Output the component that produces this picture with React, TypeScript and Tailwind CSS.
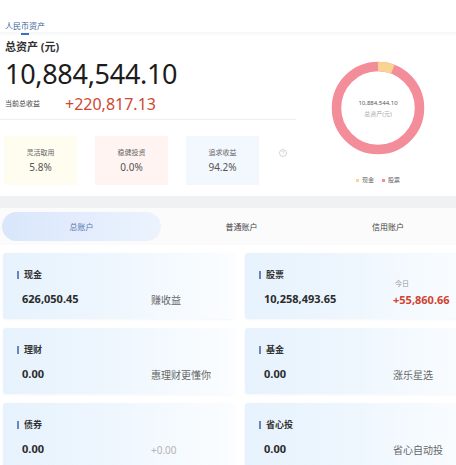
import React from 'react';

const font = { fontFamily: '"Noto Sans", "Noto Sans CJK SC", sans-serif' };

interface CardProps {
  title: string;
  value: string;
  side?: string;
  sideTop?: string;
  sideTone?: 'normal' | 'red' | 'muted';
}

const AccountCard: React.FC<CardProps> = ({ title, value, side, sideTop, sideTone = 'normal' }) => {
  const sideCls =
    sideTone === 'red'
      ? 'text-[11px] font-bold text-[#d0422f]'
      : sideTone === 'muted'
      ? 'text-[10px] text-[#b4b4b4]'
      : 'text-[10px] text-[#666]';
  return (
    <div className="h-[66px] rounded-[3px] bg-gradient-to-r from-[#e6f2fd] via-[#eff7fe] to-[#fbfdff] shadow-[0_1px_3px_rgba(0,0,0,0.04)] pt-[15px]">
      <div className="flex items-center h-[14px] pl-[14px]">
        <span className="w-[2px] h-[8px] bg-[#6a86b8] mr-[5px]" />
        <span className="text-[9px] font-bold text-[#333]">{title}</span>
      </div>
      <div className="grid grid-cols-[129px_1fr] mt-[8px] pl-[19px] items-center">
        <span className="text-[11px] font-bold text-[#2b2b2b] leading-[16px]">{value}</span>
        <div className="relative leading-none">
          {sideTop && (
            <span className="absolute bottom-full left-[2px] mb-[3px] text-[7px] text-[#999] leading-none">{sideTop}</span>
          )}
          {side && <span className={`${sideCls} leading-[16px]`}>{side}</span>}
        </div>
      </div>
    </div>
  );
};

const Donut: React.FC = () => {
  const r = 41.5;
  const c = 2 * Math.PI * r;
  const cash = c * 0.058;
  return (
    <div className="relative w-[94px] h-[94px]">
      <svg width="94" height="94" viewBox="0 0 94 94" className="-rotate-90">
        <circle cx="47" cy="47" r={r} fill="none" stroke="#f48d9a" strokeWidth="9.5" />
        <circle
          cx="47"
          cy="47"
          r={r}
          fill="none"
          stroke="#f8d391"
          strokeWidth="9.5"
          strokeDasharray={`${cash} ${c - cash}`}
        />
      </svg>
      <div className="absolute inset-0 flex flex-col items-center justify-center">
        <span className="text-[6px] text-[#555] leading-none">10,884,544.10</span>
        <span className="text-[6px] text-[#aaa] leading-none mt-[5px]">总资产(元)</span>
      </div>
    </div>
  );
};

export default function App() {
  return (
    <div className="w-[456px] h-[465px] overflow-hidden bg-white" style={font}>
      {/* Currency tab */}
      <div className="h-[32px] pl-[5px] pt-[11px]">
        <div className="inline-flex flex-col items-center">
          <span className="text-[8px] text-[#3d5f99] leading-[10px]">人民币资产</span>
          <span className="w-[8px] h-[1.5px] bg-[#3d6fc4] mt-[2px]" />
        </div>
      </div>
      <div className="h-[4px] bg-gradient-to-b from-[#f4f6f8] to-white" />

      {/* Total assets */}
      <div className="flex h-[160px]">
        <div className="w-[296px] pl-[5px]">
          <div className="text-[11px] font-bold text-[#333] leading-[14px] mt-[4px]">总资产 (元)</div>
          <div className="text-[27px] text-[#1c1c1c] leading-[32px] mt-[4px] tracking-[-0.3px]">10,884,544.10</div>
          <div className="flex items-center mt-[4px] h-[20px]">
            <span className="text-[7px] text-[#444] w-[60px]">当前总收益</span>
            <span className="text-[16px] text-[#d0472f] leading-none">+220,817.13</span>
          </div>
          <div className="h-px bg-[#eeeeee] mt-[5px] -ml-[5px]" />
          <div className="flex items-center gap-[18px] mt-[16px] -ml-[1px]">
            <div className="w-[73px] h-[49px] bg-[#fffcf0] flex flex-col items-center justify-center">
              <span className="text-[7px] text-[#666] leading-none">灵活取用</span>
              <span className="text-[10px] text-[#555] leading-none mt-[6px]">5.8%</span>
            </div>
            <div className="w-[73px] h-[49px] bg-[#fff4f2] flex flex-col items-center justify-center">
              <span className="text-[7px] text-[#666] leading-none">稳健投资</span>
              <span className="text-[10px] text-[#555] leading-none mt-[6px]">0.0%</span>
            </div>
            <div className="w-[73px] h-[49px] bg-[#f3f7fe] flex flex-col items-center justify-center">
              <span className="text-[7px] text-[#666] leading-none">追求收益</span>
              <span className="text-[10px] text-[#555] leading-none mt-[6px]">94.2%</span>
            </div>
            <svg width="8" height="8" viewBox="0 0 16 16" className="-mt-[15px] ml-[2px]">
              <circle cx="8" cy="8" r="7" fill="none" stroke="#bbb" strokeWidth="1.2" />
              <path d="M6 6.2a2 2 0 1 1 2.8 1.8c-.6.3-.8.7-.8 1.3" fill="none" stroke="#bbb" strokeWidth="1.2" />
              <circle cx="8" cy="11.6" r=".8" fill="#bbb" />
            </svg>
          </div>
        </div>
        <div className="flex-1 flex flex-col items-center pt-[25px] pl-[4px]">
          <Donut />
          <div className="flex items-center gap-[8px] mt-[21px] text-[6px] text-[#666]">
            <span className="flex items-center gap-[3px]">
              <span className="w-[3px] h-[3px] bg-[#f8d391]" />
              现金
            </span>
            <span className="flex items-center gap-[3px]">
              <span className="w-[3px] h-[3px] bg-[#f48d9a]" />
              股票
            </span>
          </div>
        </div>
      </div>

      <div className="h-[12px] bg-[#eff1f3]" />

      {/* Account tabs */}
      <div className="flex items-center h-[37px] px-[2px] bg-[#fbfbfb]">
        <div className="w-[159px] h-[29px] rounded-full bg-gradient-to-r from-[#d9e6fb] to-[#ecf3fe] flex items-center justify-center text-[8px] text-[#5a78ad]">
          总账户
        </div>
        <div className="w-[161px] text-center text-[8px] text-[#444]">普通账户</div>
        <div className="flex-1 text-center text-[8px] text-[#444]">信用账户</div>
      </div>

      {/* Cards */}
      <div className="grid grid-cols-[232px_232px] gap-x-[10px] gap-y-[9px] pl-[3px] pt-[8px]">
        <AccountCard title="现金" value="626,050.45" side="赚收益" />
        <AccountCard title="股票" value="10,258,493.65" sideTop="今日" side="+55,860.66" sideTone="red" />
        <AccountCard title="理财" value="0.00" side="惠理财更懂你" />
        <AccountCard title="基金" value="0.00" side="涨乐星选" />
        <AccountCard title="债券" value="0.00" side="+0.00" sideTone="muted" />
        <AccountCard title="省心投" value="0.00" side="省心自动投" />
      </div>
    </div>
  );
}
